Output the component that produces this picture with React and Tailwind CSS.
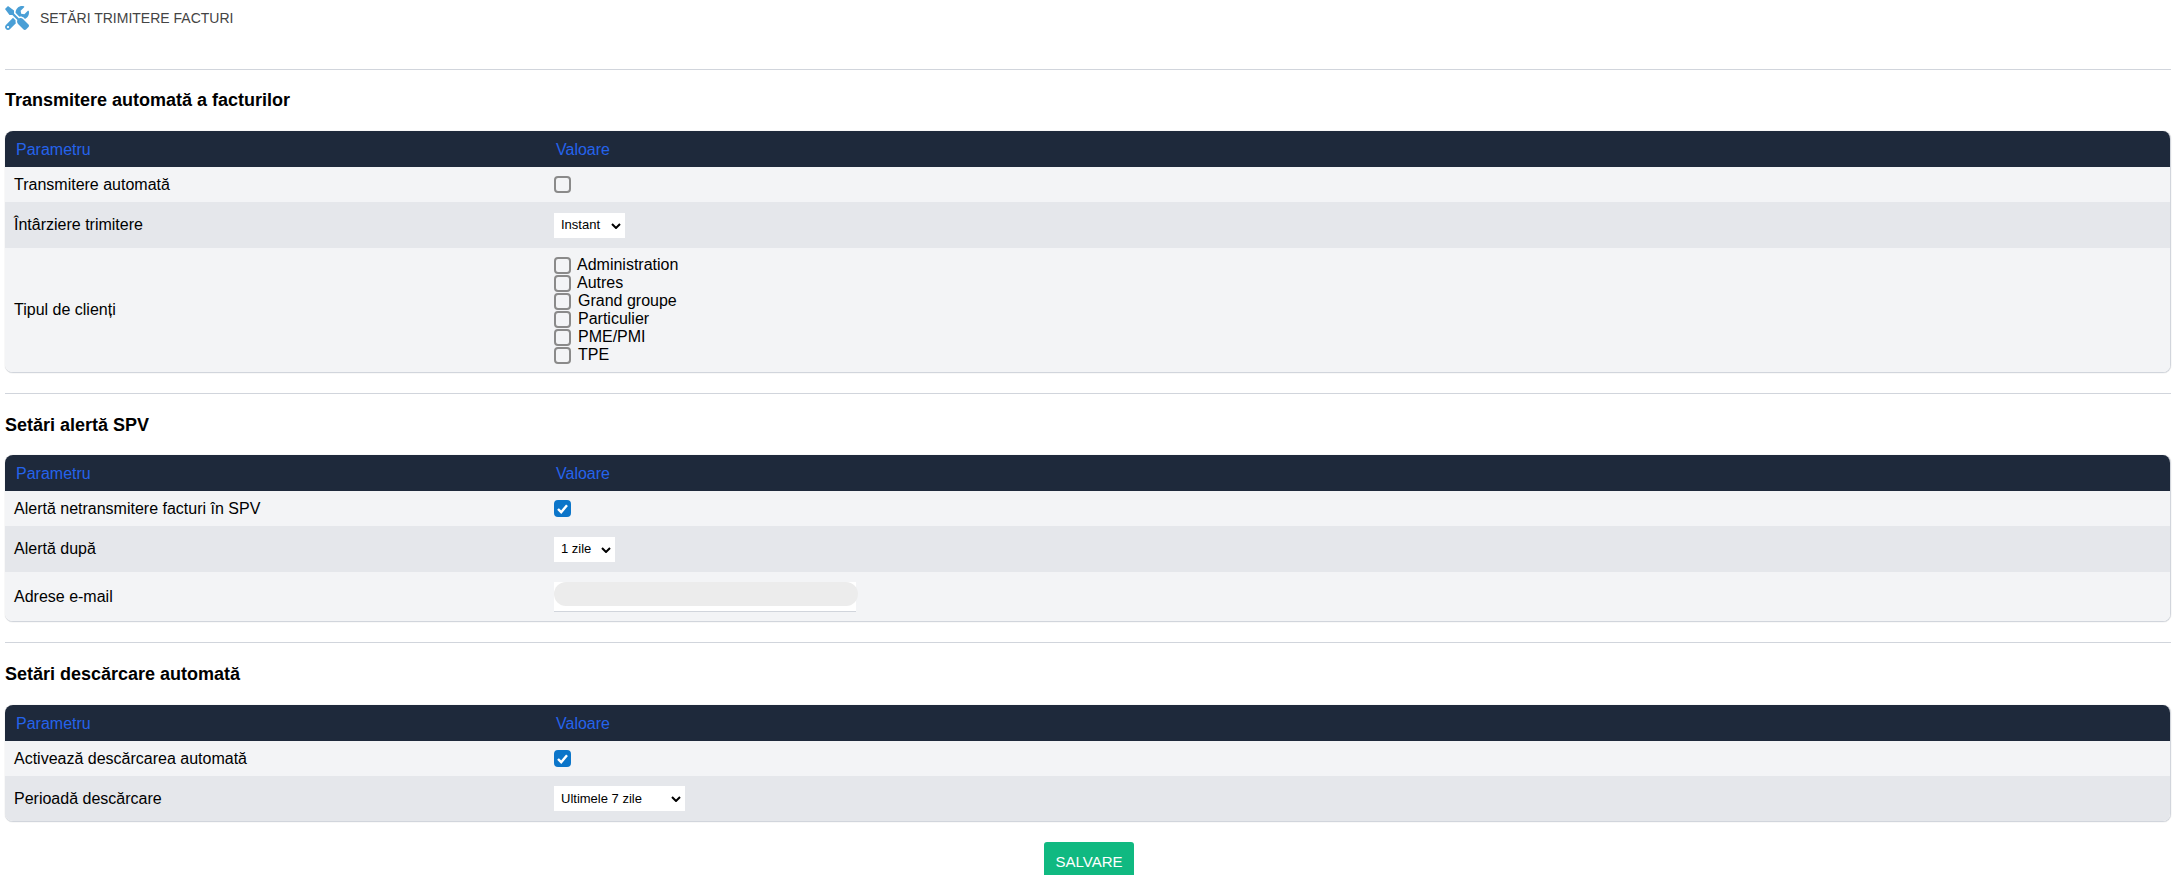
import React from "react";
import { FaTools } from "react-icons/fa";

const clientTypes = [
  { label: "Administration", gap: "ml-[6px]" },
  { label: "Autres", gap: "ml-[6px]" },
  { label: "Grand groupe", gap: "ml-[7px]" },
  { label: "Particulier", gap: "ml-[7px]" },
  { label: "PME/PMI", gap: "ml-[7px]" },
  { label: "TPE", gap: "ml-[7px]" },
];

const Checkbox = ({ checked = false }) => (
  <span className="relative block h-[17px] w-[17px] shrink-0">
    <input
      type="checkbox"
      defaultChecked={checked}
      className="peer m-0 block h-[17px] w-[17px] appearance-none rounded-[4px] border-2 border-[#8a8a8a] bg-[#f3f4f6] checked:border-[#0b75c9] checked:bg-[#0b75c9]"
    />
    <svg
      viewBox="0 0 17 17"
      className="pointer-events-none absolute inset-0 hidden h-[17px] w-[17px] peer-checked:block"
    >
      <path d="M4 9l3.2 3.2L13 5.2" fill="none" stroke="white" strokeWidth="2.4" />
    </svg>
  </span>
);

const Select = ({ options, width }) => (
  <span className={`relative block h-[25px] ${width}`}>
    <select className="block h-[25px] w-full appearance-none bg-white pl-[7px] text-[13px] text-black outline-none">
      {options.map((o) => (
        <option key={o}>{o}</option>
      ))}
    </select>
    <svg
      viewBox="0 0 10 6"
      className="pointer-events-none absolute top-[10px] right-[4px] h-[6px] w-[10px]"
    >
      <path d="M1 1l4 4 4-4" fill="none" stroke="black" strokeWidth="2" />
    </svg>
  </span>
);

const Row = ({ label, height, even, children }) => (
  <div className={`flex items-center ${height} ${even ? "bg-gray-200" : "bg-gray-100"}`}>
    <div className="w-[549px] pl-[9px] text-black">{label}</div>
    <div>{children}</div>
  </div>
);

const Section = ({ title, titleMargin = "mt-[22px] mb-[21px]", children }) => (
  <section>
    <hr className="border-t border-gray-300" />
    <h2 className={`${titleMargin} h-[18px] text-lg leading-[18px] font-bold text-black`}>{title}</h2>
    <div className="overflow-hidden rounded-lg border-r border-b border-gray-300 shadow-[0_0_1px_rgba(0,0,0,0.3)]">
      <div className="flex h-9 items-center bg-[#1e293b] pt-[2px] text-[#2563eb]">
        <div className="w-[549px] pl-[11px]">Parametru</div>
        <div className="pl-[2px]">Valoare</div>
      </div>
      {children}
    </div>
  </section>
);

const App = () => {
  return (
    <div className="h-screen overflow-hidden bg-white pl-[5px] pr-[1px] font-['Liberation_Sans',Arial,sans-serif] text-base">
      <div className="flex h-[69px] items-start pt-[6px]">
        <FaTools className="h-6 w-6 shrink-0 text-[#4a9fd6]" />
        <span className="mt-[1px] ml-[11px] text-sm leading-[22px] text-[#444]">SETĂRI TRIMITERE FACTURI</span>
      </div>

      <Section title="Transmitere automată a facturilor" titleMargin="mt-[21px] mb-[22px]">
        <Row label="Transmitere automată" height="h-[35px]">
          <Checkbox />
        </Row>
        <Row label="Întârziere trimitere" height="h-[46px]" even>
          <Select options={["Instant"]} width="w-[71px]" />
        </Row>
        <Row label="Tipul de clienți" height="h-[124px]">
          <div className="flex flex-col">
            {clientTypes.map((c) => (
              <label key={c.label} className="flex h-[18px] items-center leading-[18px] text-black">
                <Checkbox />
                <span className={c.gap}>{c.label}</span>
              </label>
            ))}
          </div>
        </Row>
      </Section>

      <div className="mt-5">
        <Section title="Setări alertă SPV">
          <Row label="Alertă netransmitere facturi în SPV" height="h-[35px]">
            <Checkbox checked />
          </Row>
          <Row label="Alertă după" height="h-[46px]" even>
            <Select options={["1 zile"]} width="w-[61px]" />
          </Row>
          <Row label="Adrese e-mail" height="h-[49px]">
            <div className="h-[30px] w-[302px] border-b border-gray-300 bg-white">
              <div className="h-6 w-[304px] rounded-xl bg-[#ececec]" />
            </div>
          </Row>
        </Section>
      </div>

      <div className="mt-5">
        <Section title="Setări descărcare automată" titleMargin="mt-[22px] mb-[22px]">
          <Row label="Activează descărcarea automată" height="h-[35px]">
            <Checkbox checked />
          </Row>
          <Row label="Perioadă descărcare" height="h-[45px]" even>
            <Select options={["Ultimele 7 zile"]} width="w-[131px]" />
          </Row>
        </Section>
      </div>

      <div className="mt-5 flex justify-center pl-[2px]">
        <button className="h-10 w-[90px] rounded-[3px] bg-[#10b981] text-[15px] text-white">SALVARE</button>
      </div>
    </div>
  );
};

export default App;
